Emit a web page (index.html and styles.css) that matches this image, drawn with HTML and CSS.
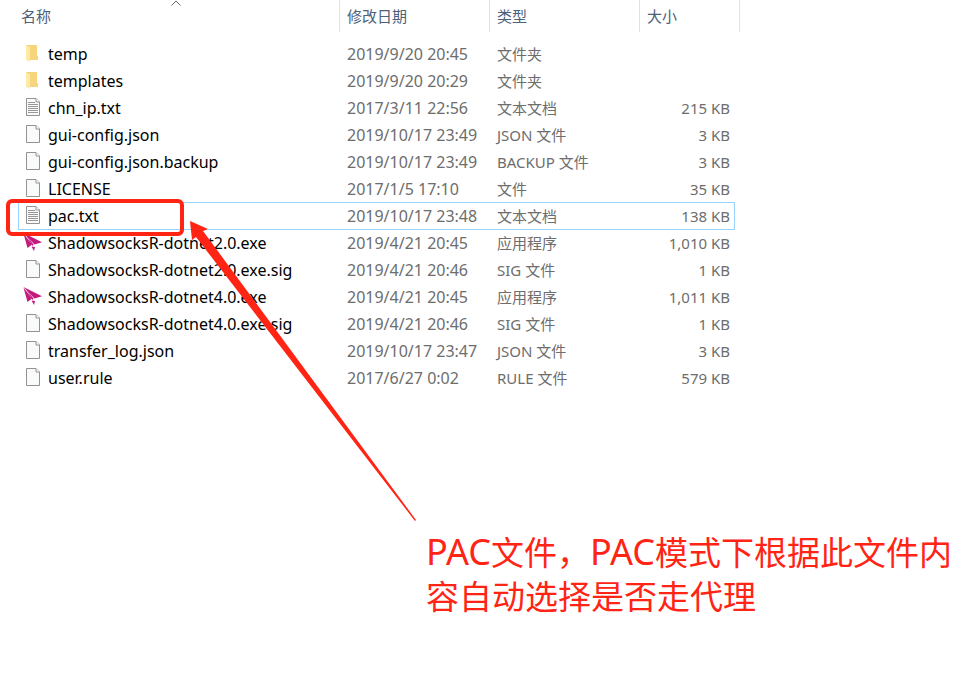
FILE: index.html
```html
<!DOCTYPE html>
<html lang="zh-CN">
<head>
<meta charset="utf-8">
<title>文件列表</title>
<link rel="stylesheet" href="styles.css">
</head>
<body>
<svg class="defs" width="0" height="0" aria-hidden="true">
  <symbol id="folder" viewBox="0 0 16 21">
    <path d="M2 1h11v11h1v4H5z" fill="#f3cd68"/>
    <path d="M6 1h7v11h1v4H6z" fill="#f6d57c"/>
    <path d="M2 1l4 2v15l-4-2z" fill="#ffe9a6"/>
  </symbol>
  <symbol id="file" viewBox="0 0 16 21">
    <path d="M2.500.5h9.500l3.500 3.500v13.500h-13z" fill="#f9fafa" stroke="#929292"/>
    <path d="M12 .5v3.500h3.500" fill="#fff" stroke="#929292"/>
  </symbol>
  <symbol id="text" viewBox="0 0 16 21">
    <path d="M2.500.5h9.500l3.500 3.500v13.500h-13z" fill="#f9fafa" stroke="#929292"/>
    <path d="M12 .5v3.500h3.500" fill="#fff" stroke="#929292"/>
    <path d="M4 4.500h7M4 6.500h10M4 8.500h10M4 10.500h10M4 12.500h10M4 14.500h10" stroke="#969696" fill="none"/>
  </symbol>
  <symbol id="plane" viewBox="0 0 20 21">
    <path d="M1.500 0L20 9.300l-7.500 2.200z" fill="#c4197d"/>
    <path d="M1.500.5L10 11.500l-4.500 3.500z" fill="#c4197d"/>
    <path d="M4 2l7.500 9.500-1 1.500z" fill="#c4197d"/>
    <path d="M9.500 13.500l3.500.500-1 4z" fill="#c4197d"/>
  </symbol>
</svg>
<main class="pane">
  <table class="files">
    <colgroup><col class="c-name"><col class="c-date"><col class="c-type"><col class="c-size"></colgroup>
    <thead>
      <tr>
        <th scope="col">名称<svg class="sort" viewBox="0 0 10 6" aria-hidden="true"><path d="M.5 5.500L5 1l4.500 4.500" fill="none" stroke="#666"/></svg></th>
        <th scope="col">修改日期</th><th scope="col">类型</th><th scope="col">大小</th>
      </tr>
    </thead>
    <tbody>
      <tr><td><div class="name"><svg class="icon"><use href="#folder"/></svg>temp</div></td><td>2019/9/20 20:45</td><td>文件夹</td><td></td></tr>
      <tr><td><div class="name"><svg class="icon"><use href="#folder"/></svg>templates</div></td><td>2019/9/20 20:29</td><td>文件夹</td><td></td></tr>
      <tr><td><div class="name"><svg class="icon"><use href="#text"/></svg>chn_ip.txt</div></td><td>2017/3/11 22:56</td><td>文本文档</td><td>215 KB</td></tr>
      <tr><td><div class="name"><svg class="icon"><use href="#file"/></svg>gui-config.json</div></td><td>2019/10/17 23:49</td><td>JSON 文件</td><td>3 KB</td></tr>
      <tr><td><div class="name"><svg class="icon"><use href="#file"/></svg>gui-config.json.backup</div></td><td>2019/10/17 23:49</td><td>BACKUP 文件</td><td>3 KB</td></tr>
      <tr><td><div class="name"><svg class="icon"><use href="#file"/></svg>LICENSE</div></td><td>2017/1/5 17:10</td><td>文件</td><td>35 KB</td></tr>
      <tr class="focused"><td><div class="name"><svg class="icon"><use href="#text"/></svg>pac.txt<span class="marker"></span></div></td><td>2019/10/17 23:48</td><td>文本文档</td><td>138 KB</td></tr>
      <tr><td><div class="name"><svg class="icon plane"><use href="#plane"/></svg>ShadowsocksR-dotnet2.0.exe</div></td><td>2019/4/21 20:45</td><td>应用程序</td><td>1,010 KB</td></tr>
      <tr><td><div class="name"><svg class="icon"><use href="#file"/></svg>ShadowsocksR-dotnet2.0.exe.sig</div></td><td>2019/4/21 20:46</td><td>SIG 文件</td><td>1 KB</td></tr>
      <tr><td><div class="name"><svg class="icon plane"><use href="#plane"/></svg>ShadowsocksR-dotnet4.0.exe</div></td><td>2019/4/21 20:45</td><td>应用程序</td><td>1,011 KB</td></tr>
      <tr><td><div class="name"><svg class="icon"><use href="#file"/></svg>ShadowsocksR-dotnet4.0.exe.sig</div></td><td>2019/4/21 20:46</td><td>SIG 文件</td><td>1 KB</td></tr>
      <tr><td><div class="name"><svg class="icon"><use href="#file"/></svg>transfer_log.json</div></td><td>2019/10/17 23:47</td><td>JSON 文件</td><td>3 KB</td></tr>
      <tr><td><div class="name"><svg class="icon"><use href="#file"/></svg>user.rule</div></td><td>2017/6/27 0:02</td><td>RULE 文件</td><td>579 KB</td></tr>
    </tbody>
  </table>
  <svg class="arrow" viewBox="0 0 226 300" aria-hidden="true"><path d="M0 0l18 8-5 2L226 299l-1 1L6 16l-4 3z" fill="#ff2414"/></svg>
  <p class="note"><span class="latin">PAC</span>文件，<span class="latin">PAC</span>模式下根据此文件内容自动选择是否走代理</p>
</main>
</body>
</html>
```
FILE: styles.css
```css
* { box-sizing: border-box; }
body {
  margin: 0;
  background: #fff;
  color: #6d6d6d;
  font: 15px/25px "Noto Sans", "Noto Sans CJK SC", sans-serif;
}
.defs { position: absolute; }
.pane { position: relative; padding-left: 18px; }
.files {
  width: 722px;
  table-layout: fixed;
  border-collapse: separate;
  border-spacing: 0;
}
.c-name { width: 322px; }
.c-date, .c-type { width: 150px; }
.c-size { width: 100px; }
th {
  position: relative;
  height: 32px;
  padding: 0 0 0 7px;
  border-right: 1px solid #e2e2e2;
  color: #4c607a;
  font-weight: 400;
  text-align: left;
}
th:first-child { padding-left: 3px; }
.sort { position: absolute; top: 0; left: 153px; width: 10px; height: 6px; }
tbody::before { content: ""; display: block; height: 8px; }
tbody tr { position: relative; }
td { height: 27px; padding: 2px 0 0 7px; white-space: nowrap; }
td:first-child { padding-left: 6px; color: #000; }
td:first-child, td:nth-child(2) { font-size: 16px; }
td:last-child { padding: 2px 10px 0 0; text-align: right; }
.name { position: relative; display: flex; align-items: center; gap: 8px; }
.icon { width: 16px; height: 21px; flex: none; }
.plane { width: 20px; margin: 0 -2px; }
.focused::after {
  content: "";
  position: absolute;
  inset: 0 5px -1px 0;
  border: 1px solid #99d1ff;
}
.marker {
  position: absolute;
  z-index: 1;
  top: -5px;
  left: -18px;
  width: 178px;
  height: 37px;
  border: 4px solid #ff2414;
  border-radius: 6px;
}
.arrow { position: absolute; z-index: 2; top: 221px; left: 190px; width: 226px; height: 300px; }
.note {
  margin: 140px 0 0 408px;
  color: #ff2414;
  font-size: 33px;
  line-height: 44px;
}
.latin { font-size: 36px; line-height: 1; }
```
